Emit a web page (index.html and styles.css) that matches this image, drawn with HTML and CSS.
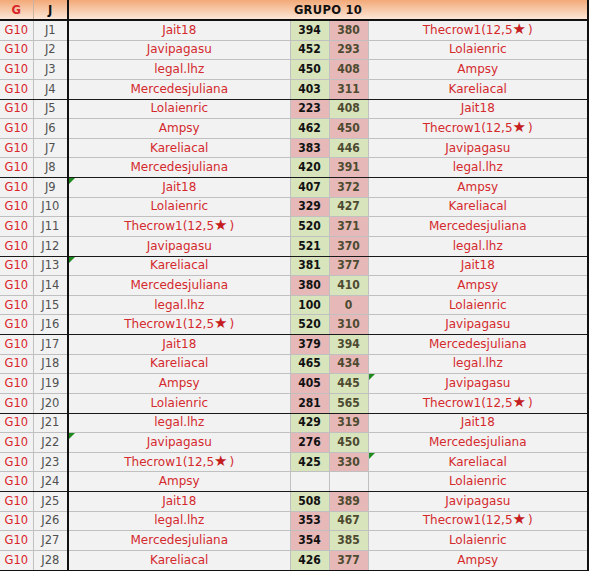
FILE: index.html
```html
<!DOCTYPE html>
<html>
<head>
<meta charset="utf-8">
<link rel="stylesheet" href="styles.css">
</head>
<body>
<table class="sheet">
<colgroup><col class="c-g"><col class="c-j"><col class="c-name"><col class="c-s"><col class="c-s"><col class="c-name2"></colgroup>
<thead>
<tr><th class="h-g">G</th><th class="h-j">J</th><th colspan="4" class="h-grp">GRUPO 10</th></tr>
</thead>
<tbody>
<tr><td class="g">G10</td><td class="j">J1</td><td class="n">Jait18</td><td class="s1 w">394</td><td class="s2 l">380</td><td class="n2">Thecrow1(12,5<span class="star">★</span>)</td></tr>
<tr><td class="g">G10</td><td class="j">J2</td><td class="n">Javipagasu</td><td class="s1 w">452</td><td class="s2 l">293</td><td class="n2">Lolaienric</td></tr>
<tr><td class="g">G10</td><td class="j">J3</td><td class="n">legal.lhz</td><td class="s1 w">450</td><td class="s2 l">408</td><td class="n2">Ampsy</td></tr>
<tr class="end"><td class="g">G10</td><td class="j">J4</td><td class="n">Mercedesjuliana</td><td class="s1 w">403</td><td class="s2 l">311</td><td class="n2">Kareliacal</td></tr>
<tr><td class="g">G10</td><td class="j">J5</td><td class="n">Lolaienric</td><td class="s1 l">223</td><td class="s2 w">408</td><td class="n2">Jait18</td></tr>
<tr><td class="g">G10</td><td class="j">J6</td><td class="n">Ampsy</td><td class="s1 w">462</td><td class="s2 l">450</td><td class="n2">Thecrow1(12,5<span class="star">★</span>)</td></tr>
<tr><td class="g">G10</td><td class="j">J7</td><td class="n">Kareliacal</td><td class="s1 l">383</td><td class="s2 w">446</td><td class="n2">Javipagasu</td></tr>
<tr class="end"><td class="g">G10</td><td class="j">J8</td><td class="n">Mercedesjuliana</td><td class="s1 w">420</td><td class="s2 l">391</td><td class="n2">legal.lhz</td></tr>
<tr><td class="g">G10</td><td class="j">J9</td><td class="n mark">Jait18</td><td class="s1 w">407</td><td class="s2 l">372</td><td class="n2">Ampsy</td></tr>
<tr><td class="g">G10</td><td class="j">J10</td><td class="n">Lolaienric</td><td class="s1 l">329</td><td class="s2 w">427</td><td class="n2">Kareliacal</td></tr>
<tr><td class="g">G10</td><td class="j">J11</td><td class="n">Thecrow1(12,5<span class="star">★</span>)</td><td class="s1 w">520</td><td class="s2 l">371</td><td class="n2">Mercedesjuliana</td></tr>
<tr class="end"><td class="g">G10</td><td class="j">J12</td><td class="n">Javipagasu</td><td class="s1 w">521</td><td class="s2 l">370</td><td class="n2">legal.lhz</td></tr>
<tr><td class="g">G10</td><td class="j">J13</td><td class="n mark">Kareliacal</td><td class="s1 w">381</td><td class="s2 l">377</td><td class="n2">Jait18</td></tr>
<tr><td class="g">G10</td><td class="j">J14</td><td class="n">Mercedesjuliana</td><td class="s1 l">380</td><td class="s2 w">410</td><td class="n2">Ampsy</td></tr>
<tr><td class="g">G10</td><td class="j">J15</td><td class="n">legal.lhz</td><td class="s1 w">100</td><td class="s2 l">0</td><td class="n2">Lolaienric</td></tr>
<tr class="end"><td class="g">G10</td><td class="j">J16</td><td class="n">Thecrow1(12,5<span class="star">★</span>)</td><td class="s1 w">520</td><td class="s2 l">310</td><td class="n2">Javipagasu</td></tr>
<tr><td class="g">G10</td><td class="j">J17</td><td class="n">Jait18</td><td class="s1 l">379</td><td class="s2 w">394</td><td class="n2">Mercedesjuliana</td></tr>
<tr><td class="g">G10</td><td class="j">J18</td><td class="n">Kareliacal</td><td class="s1 w">465</td><td class="s2 l">434</td><td class="n2">legal.lhz</td></tr>
<tr><td class="g">G10</td><td class="j">J19</td><td class="n">Ampsy</td><td class="s1 l">405</td><td class="s2 w">445</td><td class="n2 mark">Javipagasu</td></tr>
<tr class="end"><td class="g">G10</td><td class="j">J20</td><td class="n">Lolaienric</td><td class="s1 l">281</td><td class="s2 w">565</td><td class="n2">Thecrow1(12,5<span class="star">★</span>)</td></tr>
<tr><td class="g">G10</td><td class="j">J21</td><td class="n">legal.lhz</td><td class="s1 w">429</td><td class="s2 l">319</td><td class="n2">Jait18</td></tr>
<tr><td class="g">G10</td><td class="j">J22</td><td class="n mark">Javipagasu</td><td class="s1 l">276</td><td class="s2 w">450</td><td class="n2">Mercedesjuliana</td></tr>
<tr><td class="g">G10</td><td class="j">J23</td><td class="n">Thecrow1(12,5<span class="star">★</span>)</td><td class="s1 w">425</td><td class="s2 l">330</td><td class="n2 mark">Kareliacal</td></tr>
<tr class="end"><td class="g">G10</td><td class="j">J24</td><td class="n">Ampsy</td><td class="s1"></td><td class="s2"></td><td class="n2">Lolaienric</td></tr>
<tr><td class="g">G10</td><td class="j">J25</td><td class="n">Jait18</td><td class="s1 w">508</td><td class="s2 l">389</td><td class="n2">Javipagasu</td></tr>
<tr><td class="g">G10</td><td class="j">J26</td><td class="n">legal.lhz</td><td class="s1 l">353</td><td class="s2 w">467</td><td class="n2">Thecrow1(12,5<span class="star">★</span>)</td></tr>
<tr><td class="g">G10</td><td class="j">J27</td><td class="n">Mercedesjuliana</td><td class="s1 l">354</td><td class="s2 w">385</td><td class="n2">Lolaienric</td></tr>
<tr class="last"><td class="g">G10</td><td class="j">J28</td><td class="n">Kareliacal</td><td class="s1 w">426</td><td class="s2 l">377</td><td class="n2">Ampsy</td></tr>
</tbody>
</table>
</body>
</html>
```

FILE: styles.css
```css
html, body {
  margin: 0;
  padding: 0;
  background: #ffffff;
}

.sheet {
  border-collapse: collapse;
  table-layout: fixed;
  width: 588px;
  font-family: "DejaVu Sans", Verdana, sans-serif;
  font-size: 11.5px;
}

.c-g { width: 33px; }
.c-j { width: 35px; }
.c-name { width: 222px; }
.c-s { width: 39px; }
.c-name2 { width: 220px; }

.sheet th {
  height: 19px;
  padding: 0;
  font-weight: bold;
  font-size: 11.5px;
  background: linear-gradient(to bottom, #f2a978, #fce6d6);
  border-bottom: 2px solid #111111;
  border-right: 1px solid #c9b3a3;
  text-align: center;
  color: #111111;
}

.sheet th.h-g { color: #d9262b; }
.sheet th.h-j { border-right: 2px solid #111111; }
.sheet th.h-grp { border-right: 2px solid #111111; letter-spacing: 0.3px; }

.sheet td {
  height: 18.64px;
  padding: 0;
  background: #f2f2f2;
  border-bottom: 1px solid #c0c0c0;
  border-right: 1px solid #c0c0c0;
  text-align: center;
  white-space: nowrap;
  line-height: 17px;
}

.sheet tr.end td { border-bottom: 1px solid #1a1a1a; }
.sheet tr.last td { border-bottom: 2px solid #111111; }

.g { color: #d9262b; }
.j { color: #505050; }
.sheet td.j { border-right: 2px solid #111111; }

.n, .n2 { color: #d42a2e; font-size: 12px; }
.sheet td.n2 { border-right: 2px solid #111111; }

.star {
  font-size: 15px;
  line-height: 15px;
  color: #c41e22;
  margin-right: 2px;
}

.s1, .s2 {
  font-family: "DejaVu Sans Condensed", "DejaVu Sans", sans-serif;
  font-weight: bold;
  font-size: 12px;
}
.s1 { color: #111111; }
.s2 { color: #4d4a30; }

.sheet td.w { background: #d8e4bc; }
.sheet td.l { background: #e6b8b7; }

.mark { position: relative; }
.mark::before {
  content: "";
  position: absolute;
  left: 0;
  top: 0;
  border-top: 6px solid #1f8a1f;
  border-right: 6px solid transparent;
}
```
